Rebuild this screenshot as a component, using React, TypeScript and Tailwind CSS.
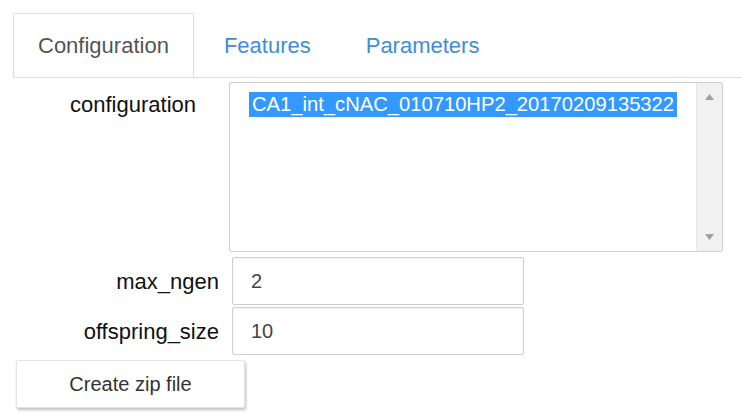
import { useState } from "react"

const tabs = ["Configuration", "Features", "Parameters"]

function Arrow({ dir }: { dir: "up" | "down" }) {
  return (
    <svg width="9" height="6" viewBox="0 0 9 6" className="block">
      {dir === "up" ? (
        <polygon points="4.5,0 9,6 0,6" fill="#a0a0a0" />
      ) : (
        <polygon points="0,0 9,0 4.5,6" fill="#a0a0a0" />
      )}
    </svg>
  )
}

export default function App() {
  const [active, setActive] = useState(0)

  return (
    <div className="w-[742px] h-[414px] bg-white overflow-hidden font-['Liberation_Sans',Arial,sans-serif]">
      {/* tab bar */}
      <div className="pt-[13px]">
        <div className="ml-[13px] flex gap-[5px] border-b border-[#dddddd]">
          {tabs.map((t, i) => (
            <button
              key={t}
              onClick={() => setActive(i)}
              className={
                i === active
                  ? "h-[64px] -mb-px px-[24px] bg-white border border-b-0 border-[#dddddd] rounded-t-[2px] text-[22px] text-[#555555]"
                  : "h-[64px] px-[25px] text-[22px] text-[#3f8dda]"
              }
            >
              {t}
            </button>
          ))}
        </div>
      </div>

      {/* configuration select */}
      <div className="flex mt-[4px]">
        <div className="w-[196px] text-right text-[22px] leading-[25px] text-[#111111] pt-[10px]">configuration</div>
        <div className="ml-[33px] w-[494px] h-[170px] flex border border-[#cfcfcf] rounded-[2px]">
          <div className="flex-1 pl-[19px] pt-[9px]">
            <div className="inline-block bg-[#3399ff] text-white text-[20.2px] leading-[25px] px-[3px]">
              CA1_int_cNAC_010710HP2_20170209135322
            </div>
          </div>
          <div className="w-[26px] bg-[#f1f1f1] border-l border-[#e6e6e6] flex flex-col items-center justify-between pt-[11px] pb-[11px]">
            <Arrow dir="up" />
            <Arrow dir="down" />
          </div>
        </div>
      </div>

      {/* numeric fields */}
      <div className="mt-[5px] flex flex-col gap-[2px]">
        {[
          ["max_ngen", "2"],
          ["offspring_size", "10"],
        ].map(([label, value]) => (
          <div key={label} className="flex items-center">
            <div className="w-[219px] text-right text-[22px] leading-[25px] text-[#111111]">{label}</div>
            <div className="ml-[13px] w-[292px] h-[48px] border border-[#cfcfcf] rounded-[2px] shadow-[inset_0_1px_2px_rgba(0,0,0,0.06)] flex items-center pl-[18px] text-[20px] text-[#444444]">
              {value}
            </div>
          </div>
        ))}
      </div>

      {/* action */}
      <div className="mt-[5px] pl-[16px]">
        <button className="w-[229px] h-[48px] bg-white border border-[#e3e3e3] rounded-[2px] shadow-[1px_2px_3px_rgba(0,0,0,0.25)] text-[20px] text-[#333333]">
          Create zip file
        </button>
      </div>
    </div>
  )
}
